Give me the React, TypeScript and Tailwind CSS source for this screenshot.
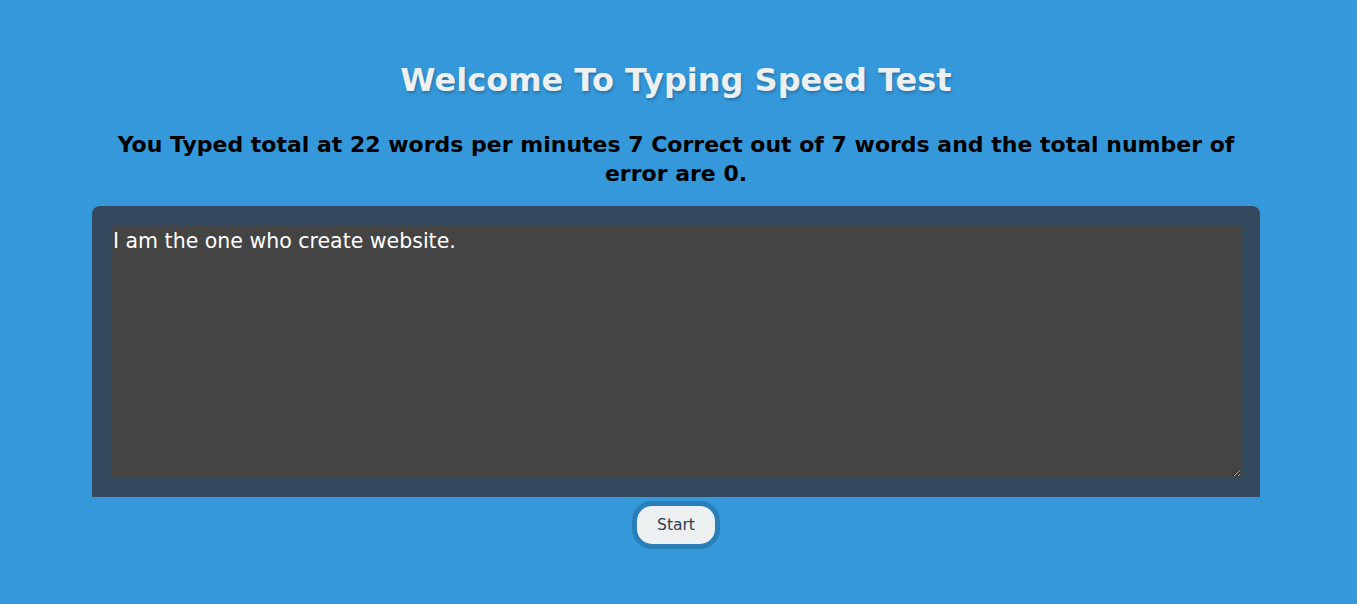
import React from "react";

export default function App() {
  const font = { fontFamily: '"DejaVu Sans", "Noto Sans", sans-serif' };
  return (
    <div className="min-h-[604px] w-full bg-[#3498db] pt-[58px]" style={font}>
      <div className="ml-[92px] w-[1168px]">
        <h1 className="text-center text-[32px] font-bold leading-[44px] text-[#ecf0f1] [text-shadow:1px_2px_3px_rgba(0,0,0,0.25)]">
          Welcome To Typing Speed Test
        </h1>
        <h2 className="mt-[28px] text-center text-[22px] font-bold leading-[29px] text-black">
          You Typed total at 22 words per minutes 7 Correct out of 7 words and the total number of error are 0.
        </h2>
        <div className="mt-[18px] rounded-t-[8px] bg-[#34495e] px-[19px] pb-[20px] pt-[19px]">
          <textarea
            className="block h-[252px] w-full resize-y bg-[#444444] px-[2px] py-[2px] text-[20.5px] leading-[28px] text-white outline-none"
            style={font}
            defaultValue="I am the one who create website."
          />
        </div>
        <div className="mt-[4px] flex justify-center">
          <button
            className="h-[48px] w-[88px] rounded-[20px] border-[5px] border-[#2980b9] bg-[#ecf0f1] pt-[2px] text-[15.5px] text-[#2c3e50]"
            style={font}
          >
            Start
          </button>
        </div>
      </div>
    </div>
  );
}
